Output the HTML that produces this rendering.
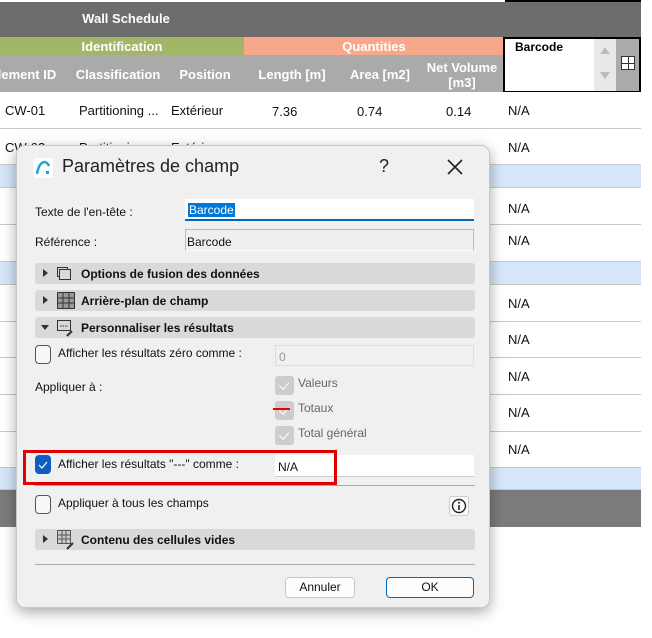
<!DOCTYPE html>
<html><head><meta charset="utf-8"><style>
*{box-sizing:border-box;margin:0;padding:0}
body{width:652px;height:638px;overflow:hidden;background:#fff;font-family:"Liberation Sans",Arial,sans-serif;position:relative}
.a{position:absolute}
.hd{color:#fff;font-weight:bold;font-size:13px;text-align:center}
.row{position:absolute;left:0;width:641px;border-bottom:1px solid #c8c8c8;background:#fff}
.blue{background:#d6e6fa}
.cell{position:absolute;font-size:13px;color:#111}
.dlg{position:absolute;left:16px;top:145px;width:474px;height:463px;background:#f0f0f0;border:1px solid #c9c9c9;border-radius:9px;box-shadow:0 4px 14px rgba(0,0,0,.35);overflow:hidden;font-size:12px;color:#111}
.lbl{position:absolute;font-size:12px}
.sec{position:absolute;left:18px;width:440px;height:21px;background:#d9d9d9;border-radius:3px;font-weight:bold;font-size:12px}
.sec .t{position:absolute;left:46px;top:4px}
.sec .tri{position:absolute;left:8px;top:6px;width:0;height:0;border-top:4px solid transparent;border-bottom:4px solid transparent;border-left:5px solid #333}
.sec .trid{position:absolute;left:6px;top:8px;border-left:4px solid transparent;border-right:4px solid transparent;border-top:5px solid #333}
.cb{position:absolute;width:16px;height:19px;border:1px solid #555;border-radius:4px;background:#f7f7f7}
.gcb{position:absolute;width:19px;height:19px;background:#cdcdcd;border-radius:3px}
.gcb:after{content:"";position:absolute;left:6px;top:4px;width:5px;height:8px;border:solid #fff;border-width:0 1.5px 1.5px 0;transform:rotate(40deg)}
.inp{position:absolute;background:#fff;border-bottom:1px solid #ccc}
.btn{position:absolute;height:21px;background:#fdfdfd;border:1px solid #c8c8c8;border-radius:4px;text-align:center;font-size:12px;line-height:19px}
</style></head><body>
<div class="a" style="left:505px;top:0;width:136px;height:2px;background:#000"></div>
<div class="a" style="left:0;top:2px;width:641px;height:35px;background:#6d6d6d"></div>
<div class="a hd" style="left:66px;top:11px;width:120px">Wall Schedule</div>
<div class="a" style="left:0;top:37px;width:244px;height:18px;background:#a3b566"></div>
<div class="a hd" style="left:0;top:39px;width:244px">Identification</div>
<div class="a" style="left:244px;top:37px;width:260px;height:18px;background:#f7a78a"></div>
<div class="a hd" style="left:244px;top:39px;width:260px">Quantities</div>
<div class="a" style="left:0;top:55px;width:504px;height:37px;background:#aaaaaa"></div>
<div class="a hd" style="left:-8px;top:67px;width:70px">lement ID</div>
<div class="a hd" style="left:70px;top:67px;width:96px">Classification</div>
<div class="a hd" style="left:170px;top:67px;width:70px">Position</div>
<div class="a hd" style="left:250px;top:67px;width:84px">Length [m]</div>
<div class="a hd" style="left:340px;top:67px;width:80px">Area [m2]</div>
<div class="a hd" style="left:420px;top:60px;width:84px;line-height:15px">Net Volume<br>[m3]</div>
<div class="a" style="left:503px;top:37px;width:138px;height:56px;border:2px solid #000;background:#aaa"></div>
<div class="a" style="left:505px;top:39px;width:89px;height:52px;background:#fff"></div>
<div class="a" style="left:515px;top:40px;font-size:12px;font-weight:bold">Barcode</div>
<div class="a" style="left:594px;top:39px;width:22px;height:52px;background:#e8e8e8"></div>
<div class="a" style="left:600px;top:47px;border-left:5px solid transparent;border-right:5px solid transparent;border-bottom:7px solid #bbb"></div>
<div class="a" style="left:600px;top:72px;border-left:5px solid transparent;border-right:5px solid transparent;border-top:7px solid #bbb"></div>
<div class="a" style="left:621px;top:56px;width:14px;height:14px;border:1px solid #333;background:#fff;background-image:linear-gradient(#333,#333),linear-gradient(90deg,#333,#333);background-size:100% 1px,1px 100%;background-position:0 6px,6px 0;background-repeat:no-repeat"></div>

<div class="row" style="top:92px;height:37px"></div>
<div class="row" style="top:129px;height:36px"></div>
<div class="row blue" style="top:165px;height:23px"></div>
<div class="row" style="top:188px;height:37px"></div>
<div class="row" style="top:225px;height:37px"></div>
<div class="row blue" style="top:262px;height:23px"></div>
<div class="row" style="top:285px;height:37px"></div>
<div class="row" style="top:322px;height:36px"></div>
<div class="row" style="top:358px;height:37px"></div>
<div class="row" style="top:395px;height:37px"></div>
<div class="row" style="top:432px;height:36px"></div>
<div class="row blue" style="top:468px;height:22px"></div>
<div class="a" style="left:0;top:490px;width:641px;height:37px;background:#7b7b7b"></div>

<div class="cell" style="left:5px;top:103px">CW-01</div>
<div class="cell" style="left:79px;top:103px">Partitioning ...</div>
<div class="cell" style="left:171px;top:103px">Extérieur</div>
<div class="cell" style="left:272px;top:104px">7.36</div>
<div class="cell" style="left:357px;top:104px">0.74</div>
<div class="cell" style="left:446px;top:104px">0.14</div>
<div class="cell" style="left:5px;top:140px">CW-02</div>
<div class="cell" style="left:79px;top:140px">Partitioning</div>
<div class="cell" style="left:171px;top:140px">Extérieur</div>
<div class="cell" style="left:508px;top:103px">N/A</div>
<div class="cell" style="left:508px;top:140px">N/A</div>
<div class="cell" style="left:508px;top:201px">N/A</div>
<div class="cell" style="left:508px;top:233px">N/A</div>
<div class="cell" style="left:508px;top:296px">N/A</div>
<div class="cell" style="left:508px;top:332px">N/A</div>
<div class="cell" style="left:508px;top:369px">N/A</div>
<div class="cell" style="left:508px;top:405px">N/A</div>
<div class="cell" style="left:508px;top:442px">N/A</div>

<div class="dlg">
 <svg class="a" style="left:16px;top:12px" width="20" height="20" viewBox="0 0 20 20"><rect x="0" y="0" width="20" height="20" rx="3" fill="#fff"/><path d="M4 16 Q6 4 12 4 Q15 5 16 8" stroke="#1ea3d8" stroke-width="2.5" fill="none"/><rect x="13" y="13" width="3" height="3" fill="#1ea3d8"/></svg>
 <div class="a" style="left:45px;top:10px;font-size:18px;color:#222">Paramètres de champ</div>
 <div class="a" style="left:362px;top:10px;font-size:18px;color:#222">?</div>
 <svg class="a" style="left:429px;top:12px" width="18" height="18"><path d="M2 2L16 16M16 2L2 16" stroke="#222" stroke-width="1.6"/></svg>
 <div class="a" style="left:0;top:42px;width:474px;height:421px;background:#f0f0f0"></div>
 <div class="lbl" style="left:18px;top:59px">Texte de l'en-tête :</div>
 <div class="inp" style="left:168px;top:53px;width:289px;height:22px;border-bottom:2px solid #0067c0"><span style="position:absolute;left:3px;top:4px;background:#0078d7;color:#fff;padding:0 1px">Barcode</span></div>
 <div class="lbl" style="left:18px;top:89px">Référence :</div>
 <div class="a" style="left:168px;top:83px;width:289px;height:22px;border:1px solid #bbb;border-bottom-color:#fff;background:#efefef;padding:5px 1px">Barcode</div>
 <div class="sec" style="top:117px"><div class="tri"></div><svg class="a" style="left:22px;top:4px" width="14" height="13"><rect x="0.5" y="0.5" width="10" height="9" fill="none" stroke="#333"/><rect x="2.5" y="2.5" width="11" height="10" fill="#d9d9d9" stroke="#333"/></svg><div class="t">Options de fusion des données</div></div>
 <div class="sec" style="top:144px"><div class="tri"></div><svg class="a" style="left:22px;top:2px" width="18" height="17"><rect x="0.5" y="0.5" width="17" height="16" fill="#999" stroke="#333"/><path d="M6 0V17M12 0V17M0 6H18M0 11H18" stroke="#333"/></svg><div class="t">Arrière-plan de champ</div></div>
 <div class="sec" style="top:171px"><div class="trid"></div><svg class="a" style="left:22px;top:3px" width="18" height="18"><rect x="0.5" y="0.5" width="13" height="10" fill="none" stroke="#333"/><path d="M3 6H11" stroke="#333" stroke-dasharray="1.5 1"/><path d="M10 16L15 11" stroke="#333" stroke-width="2"/></svg><div class="t">Personnaliser les résultats</div></div>
 <div class="cb" style="left:18px;top:199px"></div>
 <div class="lbl" style="left:41px;top:200px">Afficher les résultats zéro comme :</div>
 <div class="a" style="left:258px;top:199px;width:199px;height:21px;border:1px solid #ddd;color:#999;padding:4px 3px">0</div>
 <div class="lbl" style="left:18px;top:234px">Appliquer à :</div>
 <div class="gcb" style="left:258px;top:230px"></div><div class="lbl" style="left:281px;top:230px;color:#666">Valeurs</div>
 <div class="gcb" style="left:258px;top:255px"></div><div class="lbl" style="left:281px;top:255px;color:#666">Totaux</div>
 <div class="a" style="left:256px;top:262px;width:17px;height:2px;background:#e00"></div>
 <div class="gcb" style="left:258px;top:280px"></div><div class="lbl" style="left:281px;top:280px;color:#666">Total général</div>
 <div class="a" style="left:18px;top:309px;width:16px;height:19px;background:#0c5fc0;border-radius:4px"></div>
 <svg class="a" style="left:20px;top:313px" width="12" height="12"><path d="M2 6L5 9L10 3" stroke="#fff" stroke-width="1.2" fill="none"/></svg>
 <div class="lbl" style="left:41px;top:311px">Afficher les résultats "---" comme :</div>
 <div class="inp" style="left:258px;top:309px;width:199px;height:22px;padding:5px 3px">N/A</div>
 <div class="a" style="left:6px;top:304px;width:314px;height:35px;border:3px solid #e00000"></div>
 <div class="a" style="left:18px;top:339px;width:440px;height:1px;background:#aaa"></div>
 <div class="cb" style="left:18px;top:349px"></div>
 <div class="lbl" style="left:41px;top:350px">Appliquer à tous les champs</div>
 <div class="a" style="left:432px;top:350px;width:20px;height:20px;border:1px solid #ccc;border-radius:3px;background:#fafafa"></div>
 <svg class="a" style="left:434px;top:352px" width="16" height="16"><circle cx="8" cy="8" r="6.5" fill="none" stroke="#222" stroke-width="1.4"/><circle cx="8" cy="4.8" r="1" fill="#222"/><path d="M8 7V12" stroke="#222" stroke-width="1.6"/></svg>
 <div class="sec" style="top:383px"><div class="tri"></div><svg class="a" style="left:22px;top:1px" width="18" height="20"><rect x="0.5" y="0.5" width="13" height="13" fill="#ccc" stroke="#555"/><path d="M5 0V14M9 0V14M0 5H14M0 9H14" stroke="#555"/><path d="M10 19L16 13" stroke="#333" stroke-width="2"/></svg><div class="t">Contenu des cellules vides</div></div>
 <div class="a" style="left:18px;top:418px;width:440px;height:1px;background:#aaa"></div>
 <div class="btn" style="left:268px;top:431px;width:70px">Annuler</div>
 <div class="btn" style="left:369px;top:431px;width:88px;border-color:#0067c0">OK</div>
</div>
</body></html>
